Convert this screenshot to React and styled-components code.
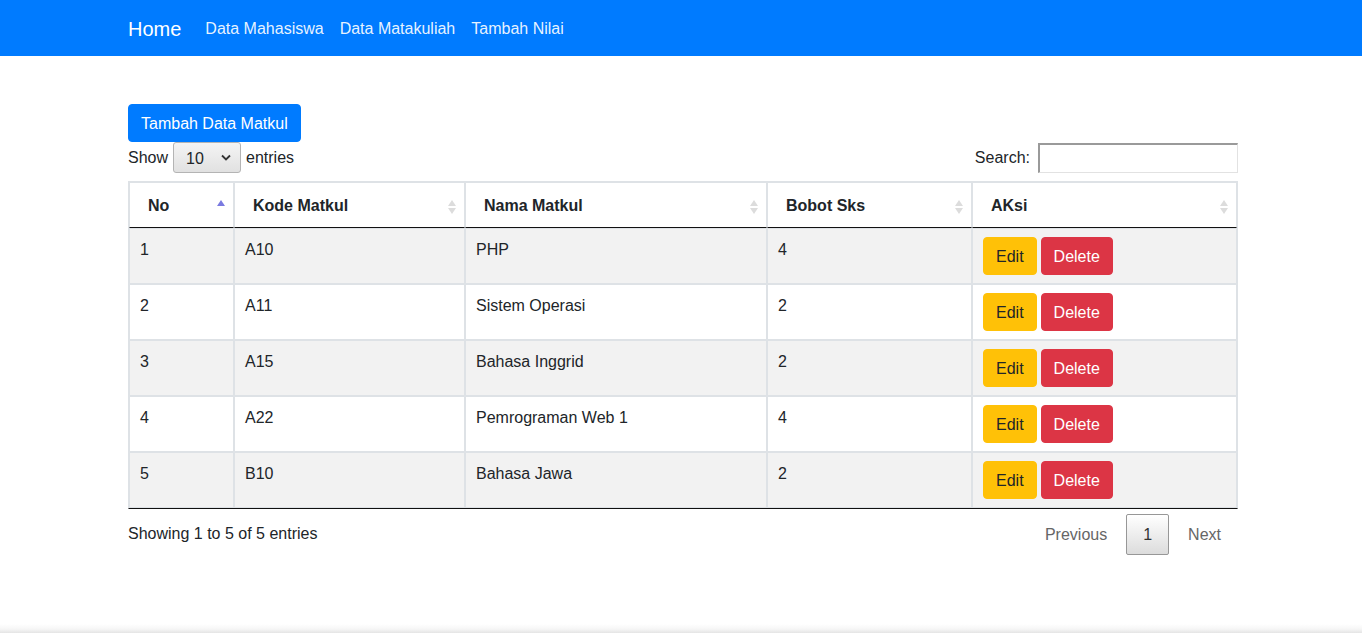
import React from 'react';
import styled, { createGlobalStyle, css } from 'styled-components';

const GlobalStyle = createGlobalStyle`
    html {
        height: 100%;
        background: linear-gradient(to top, #e4e4e4 0, #f6f6f6 4px, #fff 9px);
    }
    body {
        margin: 0;
        font-family: "Liberation Sans", Arial, sans-serif;
        font-size: 16px;
        line-height: 1.5;
        color: #212529;
    }
    * {
        box-sizing: border-box;
    }
`

const Navbar = styled.nav`
    height: 56px;
    background: #007bff;
`
const NavInner = styled.div`
    width: 1110px;
    height: 100%;
    margin-left: calc(50% - 553px);
    padding-top: 1px;
    display: flex;
    align-items: center;
`
const Brand = styled.a`
    font-size: 20px;
    color: #fff;
    margin-right: 16px;
    line-height: 30px;
`
const NavLink = styled.a`
    padding: 8px;
    color: rgba(255, 255, 255, 0.92);
`

const Container = styled.div`
    width: 1110px;
    margin-left: calc(50% - 553px);
    padding-top: 48px;
`

const Button = styled.button`
    font-family: inherit;
    font-size: 16px;
    line-height: 24px;
    padding: 7px 12px 5px;
    border: 1px solid transparent;
    border-radius: 4px;
    cursor: pointer;
    ${p => p.variant === 'primary' && css`
        background: #007bff;
        border-color: #007bff;
        color: #fff;
    `}
    ${p => p.variant === 'warning' && css`
        background: #ffc107;
        border-color: #ffc107;
        color: #212529;
    `}
    ${p => p.variant === 'danger' && css`
        background: #dc3545;
        border-color: #dc3545;
        color: #fff;
    `}
`

const Controls = styled.div`
    display: flex;
    justify-content: space-between;
    align-items: center;
    height: 31px;
`
const LengthLabel = styled.label`
    display: flex;
    align-items: center;
    gap: 5px;
`
const SelectBox = styled.div`
    position: relative;
    width: 68px;
    height: 31px;
`
const Select = styled.select`
    appearance: none;
    width: 100%;
    height: 100%;
    font-family: inherit;
    font-size: 16px;
    color: #212529;
    padding: 1px 0 0 12px;
    border: 1px solid #b4b4b4;
    border-radius: 3px;
    background: linear-gradient(#f4f4f4, #e1e1e1);
`
const Chevron = styled.svg`
    position: absolute;
    right: 10px;
    top: 12px;
    pointer-events: none;
`
const SearchLabel = styled.label`
    display: flex;
    align-items: center;
    gap: 8px;
`
const SearchInput = styled.input`
    width: 200px;
    height: 30px;
    border-style: solid;
    border-width: 2px 1px 1px 2px;
    border-color: #9a9a9a #e2e2e2 #e2e2e2 #9a9a9a;
    font-family: inherit;
    font-size: 16px;
`

const Table = styled.table`
    width: 1110px;
    margin-top: 8px;
    table-layout: fixed;
    border-collapse: separate;
    border-spacing: 0;
    border: 1px solid #dee2e6;
    border-bottom-color: #111;
`
const Th = styled.th`
    position: relative;
    width: ${p => p.w}px;
    padding: 11px 18px 9px;
    text-align: left;
    font-weight: bold;
    line-height: 24px;
    border: 1px solid #dee2e6;
    border-bottom-color: #111;

    &::before, &::after {
        content: '';
        position: absolute;
        right: 8px;
        border-left: 4px solid transparent;
        border-right: 4px solid transparent;
    }
    &::before {
        top: 17px;
        border-bottom: 6px solid ${p => p.sorted ? '#7a7ae0' : '#dcdcdc'};
    }
    &::after {
        top: 25px;
        border-top: 6px solid ${p => p.sorted ? 'transparent' : '#dcdcdc'};
    }
`
const Tr = styled.tr`
    background: ${p => p.odd ? '#f2f2f2' : '#fff'};
`
const Td = styled.td`
    padding: 9px 10px 7px;
    vertical-align: top;
    line-height: 24px;
    height: 56px;
    border: 1px solid #dee2e6;
`
const Actions = styled.div`
    display: flex;
    gap: 4px;
    margin-top: -1px;
`

const Footer = styled.div`
    display: flex;
    justify-content: space-between;
    align-items: flex-start;
`
const Info = styled.div`
    padding-top: 13px;
`
const Paginate = styled.div`
    display: flex;
    padding-top: 5px;
`
const PageButton = styled.a`
    display: block;
    margin-left: 2px;
    padding: 8px 16px 7px;
    line-height: 24px;
    border: 1px solid transparent;
    border-radius: 2px;
    color: #666;
    ${p => p.current && css`
        color: #333;
        border-color: #979797;
        background: linear-gradient(#fff 0%, #dcdcdc 100%);
    `}
`

const columns = [
    { label: 'No', w: 105, sorted: true },
    { label: 'Kode Matkul', w: 231 },
    { label: 'Nama Matkul', w: 302 },
    { label: 'Bobot Sks', w: 205 },
    { label: 'AKsi', w: 265 },
]

const matkul = [
    { kode: 'A10', nama: 'PHP', sks: 4 },
    { kode: 'A11', nama: 'Sistem Operasi', sks: 2 },
    { kode: 'A15', nama: 'Bahasa Inggrid', sks: 2 },
    { kode: 'A22', nama: 'Pemrograman Web 1', sks: 4 },
    { kode: 'B10', nama: 'Bahasa Jawa', sks: 2 },
]

export default function App() {
    return (
        <>
            <GlobalStyle />
            <Navbar>
                <NavInner>
                    <Brand>Home</Brand>
                    <NavLink>Data Mahasiswa</NavLink>
                    <NavLink>Data Matakuliah</NavLink>
                    <NavLink>Tambah Nilai</NavLink>
                </NavInner>
            </Navbar>
            <Container>
                <Button variant="primary">Tambah Data Matkul</Button>
                <Controls>
                    <LengthLabel>
                        Show
                        <SelectBox>
                            <Select defaultValue="10">
                                <option>10</option>
                                <option>25</option>
                                <option>50</option>
                                <option>100</option>
                            </Select>
                            <Chevron width="10" height="7" viewBox="0 0 10 7">
                                <path d="M1 1.5 L5 5.5 L9 1.5" fill="none" stroke="#333" strokeWidth="1.8" />
                            </Chevron>
                        </SelectBox>
                        entries
                    </LengthLabel>
                    <SearchLabel>
                        Search:
                        <SearchInput type="search" />
                    </SearchLabel>
                </Controls>
                <Table>
                    <thead>
                        <tr>
                            {columns.map(c => (
                                <Th key={c.label} w={c.w} sorted={c.sorted}>{c.label}</Th>
                            ))}
                        </tr>
                    </thead>
                    <tbody>
                        {matkul.map((m, i) => (
                            <Tr key={m.kode} odd={i % 2 === 0}>
                                <Td>{i + 1}</Td>
                                <Td>{m.kode}</Td>
                                <Td>{m.nama}</Td>
                                <Td>{m.sks}</Td>
                                <Td>
                                    <Actions>
                                        <Button variant="warning">Edit</Button>
                                        <Button variant="danger">Delete</Button>
                                    </Actions>
                                </Td>
                            </Tr>
                        ))}
                    </tbody>
                </Table>
                <Footer>
                    <Info>Showing 1 to 5 of 5 entries</Info>
                    <Paginate>
                        <PageButton>Previous</PageButton>
                        <PageButton current>1</PageButton>
                        <PageButton>Next</PageButton>
                    </Paginate>
                </Footer>
            </Container>
        </>
    )
}
